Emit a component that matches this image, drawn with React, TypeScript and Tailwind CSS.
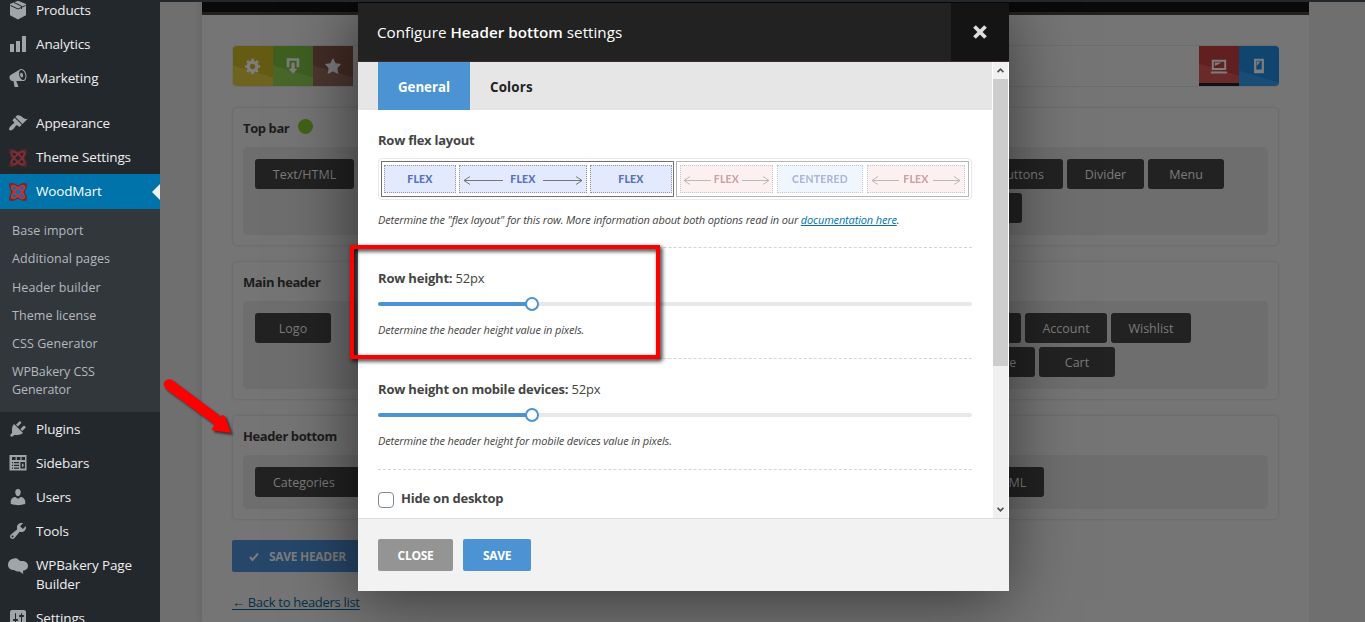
import type { ReactNode } from "react";
import clsx from "clsx";

const dash = {
  box: "M10 .8 18 4v11.2L10 19.6 2 15.2V4z",
  chart: "M18 18V2h-4v16h4zm-6 0V7H8v11h4zm-6 0v-8H2v8h4z",
  megaphone:
    "M18.15 5.94c.46 1.62.38 3.22-.02 4.48-.42 1.28-1.26 2.18-2.3 2.48-.16.06-.26.06-.4.06-.06.02-.12.02-.18.02-.06.02-.14.02-.22.02h-6.8l2.22 5.5c.02.14-.06.26-.14.34-.08.1-.24.16-.34.16H6.95c-.1 0-.26-.06-.34-.16-.08-.08-.16-.2-.14-.34l-1-5.5H4.25l-.02-.02c-.5.06-1.08-.18-1.54-.62s-.88-1.08-1.06-1.88c-.24-.8-.2-1.56-.02-2.2.18-.62.58-1.08 1.06-1.3l.02-.02 9-5.4c.1-.06.18-.1.24-.16.06-.04.14-.08.24-.12.16-.08.28-.12.5-.18 1.04-.3 2.24.1 3.22.98s1.84 2.24 2.26 3.86zm-2.58 5.98h-.02c.4-.1.74-.34 1.04-.7.58-.7.86-1.76.86-3.04 0-.64-.1-1.3-.28-1.98-.34-1.36-1.02-2.5-1.78-3.24s-1.68-1.1-2.46-.88c-.82.22-1.4.96-1.7 2-.32 1.04-.28 2.36.06 3.72.38 1.36 1 2.5 1.8 3.24.78.74 1.62 1.1 2.48.88zm-2.54-7.08c.22-.04.42-.02.62.04.38.16.76.48 1.02 1s.42 1.2.42 1.78c0 .3-.04.56-.12.8-.18.48-.44.84-.86.94-.34.1-.8-.06-1.14-.4s-.64-.86-.78-1.5c-.18-.62-.12-1.24.02-1.72s.48-.84.82-.94z",
  brush:
    "M14.48 11.06L7.41 3.99l1.5-1.5c.5-.56 2.3-.47 3.51.32 1.21.8 1.43 1.28 2.91 2.1 1.18.64 2.45 1.26 4.45.85zm-.71.71L6.7 4.7 4.93 6.47c-.39.39-.39 1.02 0 1.41l1.06 1.06c.39.39.39 1.03 0 1.42-.6.6-1.43 1.11-2.21 1.69-.35.26-.7.53-1.01.84C1.43 14.23.4 16.08 1.4 17.07c.99 1 2.84-.03 4.18-1.36.31-.31.58-.66.85-1.02.57-.78 1.08-1.61 1.69-2.21.39-.39 1.02-.39 1.41 0l1.06 1.06c.39.39 1.02.39 1.41 0z",
  plug: "M13.11 4.36L9.87 7.6 8 5.73l3.24-3.24c.35-.34 1.05-.2 1.56.32.52.51.66 1.21.31 1.55zm-8 1.77l.91-1.12 9.01 9.01-1.19.84c-.71.71-2.63 1.16-3.82 1.16H6.14L4.9 17.26c-.59.59-1.54.59-2.12 0-.59-.58-.59-1.53 0-2.12l1.24-1.24v-3.88c0-1.13.4-3.19 1.09-3.89zm7.26 3.97l3.24-3.24c.34-.35 1.04-.21 1.55.31.52.51.66 1.21.31 1.55l-3.24 3.25z",
  table:
    "M1.5 2h17v15.5h-17zM4 4v3h3.6V4zm4.8 0v3h3.6V4zm4.8 0v3H17V4zM4 9v1.2h1V9zm2 0v1.2h5V9zM4 11.8V13h1v-1.2zm2 0V13h5v-1.2zm-2 2.8v1.2h1v-1.2zm2 0v1.2h5v-1.2zM12.4 9v6.5H17V9zm1.5 1.8h1.6v2.9h-1.6z",
  user: "M10 9.25c-2.27 0-2.73-3.44-2.73-3.44C7 4.02 7.82 2 9.97 2c2.16 0 2.98 2.02 2.71 3.81 0 0-.41 3.44-2.68 3.44zm0 2.57L12.72 10c2.39 0 4.52 2.33 4.52 4.53v2.49s-3.65 1.13-7.24 1.13c-3.65 0-7.24-1.13-7.24-1.13v-2.49c0-2.25 1.94-4.48 4.47-4.48z",
  wrench:
    "M16.68 9.77c-1.34 1.34-3.3 1.67-4.95.99l-5.41 6.52c-.99.99-2.59.99-3.58 0s-.99-2.59 0-3.57l6.52-5.42c-.68-1.65-.35-3.61.99-4.95 1.28-1.28 3.12-1.62 4.72-1.06l-2.89 2.89 2.82 2.82 2.86-2.87c.53 1.58.18 3.39-1.08 4.65zM3.81 16.21c.4.39 1.04.39 1.43 0 .4-.4.4-1.04 0-1.43-.39-.4-1.03-.4-1.43 0-.39.39-.39 1.03 0 1.43z",
  bakery:
    "M6 2.6c1.8-.6 3.6 0 4.8 1.5.9 1 2 1 3.3 1 3.2 0 5.9 1.9 5.9 4.9 0 2.9-2.3 4.5-5 4.7l.2 3.3-3.7-2.4c-3.2.2-4.3-1.1-5.5-1.6C2.7 13.9 0 12.1 0 8.7 0 5.6 2.5 2.9 6 2.6z",
  sliders:
    "M18 16V4c0-1.1-.9-2-2-2H4c-1.1 0-2 .9-2 2v12c0 1.1.9 2 2 2h12c1.1 0 2-.9 2-2zM8 11h1c.55 0 1 .45 1 1s-.45 1-1 1H8v1.5c0 .28-.22.5-.5.5s-.5-.22-.5-.5V13H6c-.55 0-1-.45-1-1s.45-1 1-1h1V5.5c0-.28.22-.5.5-.5s.5.22.5.5V11zm5-2h-1c-.55 0-1-.45-1-1s.45-1 1-1h1V5.5c0-.28.22-.5.5-.5s.5.22.5.5V7h1c.55 0 1 .45 1 1s-.45 1-1 1h-1v5.5c0 .28-.22.5-.5.5s-.5-.22-.5-.5V9z",
  gear: "M18 12h-2.18c-.17.7-.44 1.35-.81 1.93l1.54 1.54-2.1 2.1-1.54-1.54c-.58.36-1.23.63-1.91.79V19H8v-2.18c-.68-.16-1.33-.43-1.91-.79l-1.54 1.54-2.12-2.12 1.54-1.54c-.36-.58-.63-1.23-.79-1.91H1V9.03h2.17c.16-.7.44-1.35.8-1.94L2.43 5.55l2.1-2.1 1.54 1.54c.58-.37 1.24-.64 1.93-.81V2h3v2.18c.68.16 1.33.43 1.91.79l1.54-1.54 2.12 2.12-1.54 1.54c.36.59.64 1.24.8 1.94H18V12zm-8.5 1.5c1.66 0 3-1.34 3-3s-1.34-3-3-3-3 1.34-3 3 1.34 3 3 3z",
  insert: "M3 1.5h14v10h-3V4.3H6v7.2H3zM8.2 6.3h3.6V13H15l-5 5.5L5 13h3.2z",
  star: "M10 1l3 6 6 .75-4.12 4.62L16 19l-6-3-6 3 1.13-6.63L1 7.75 7 7z",
  laptop: "M2 3h16v11.5H2zM4.2 5.2v7.1h11.6V5.200zM1 16h18v2.200H1zM5.300 6h7.700l-7.700 4z",
  phone: "M4.500 2h11v16h-11zM7 4.300v9.700h6V4.300zM7.600 5h4l-4 5z",
};

function Dash({ name, className }: { name: keyof typeof dash; className?: string }) {
  return (
    <svg viewBox="0 0 20 20" className={clsx("shrink-0", className)} fill="currentColor" fillRule="evenodd">
      <path d={dash[name]} />
      {name === "box" && (
        <path d="M2.5 5.5 10 9l7.5-3.500M6 2.500l7.500 3.600V9" fill="none" stroke="#23282d" strokeWidth="1" />
      )}
    </svg>
  );
}

function WoodIcon({ dim }: { dim?: boolean }) {
  return (
    <svg viewBox="0 0 20 20" className={clsx("-mb-px mt-px size-5 shrink-0", dim && "opacity-60")} fill="none">
      <path
        d="M2.500 2.500c4-1 5 2 7.500 2s3.500-3 7.500-2c1 4-2 5-2 7.500s3 3.500 2 7.500c-4 1-5-2-7.500-2s-3.500 3-7.500 2c-1-4 2-5 2-7.500s-3-3.500-2-7.500z"
        stroke="#74262b"
        strokeWidth="2.600"
      />
      <g stroke="#c4343a" strokeWidth="1.700">
        <ellipse cx="10" cy="10" rx="8.500" ry="3" transform="rotate(45 10 10)" />
        <ellipse cx="10" cy="10" rx="8.500" ry="3" transform="rotate(-45 10 10)" />
      </g>
    </svg>
  );
}

function MenuItem({ icon, children, active }: { icon: ReactNode; children: ReactNode; active?: boolean }) {
  return (
    <a
      className={clsx(
        "relative flex w-full shrink-0 gap-2 py-2 pl-2 text-[13.5px] leading-[18.2px] tracking-[-0.15px] text-[#eee]",
        active && "bg-[#0073aa] text-white",
      )}
    >
      <span className="-my-px text-[#a0a5aa]">{icon}</span>
      <span className="w-[110px]">{children}</span>
      {active && (
        <span className="absolute right-0 top-1/2 -translate-y-1/2 border-y-8 border-r-8 border-y-transparent border-r-[#f1f1f1]" />
      )}
    </a>
  );
}

const submenu = ["Base import", "Additional pages", "Header builder", "Theme license", "CSS Generator"];

function Sidebar() {
  return (
    <aside className="relative z-20 h-full w-40 shrink-0 overflow-hidden bg-[#23282d]">
      <nav className="-mt-[7px] flex flex-col">
        <MenuItem icon={<Dash name="box" className="size-5" />}>Products</MenuItem>
        <MenuItem icon={<Dash name="chart" className="size-5" />}>Analytics</MenuItem>
        <MenuItem icon={<Dash name="megaphone" className="size-5" />}>Marketing</MenuItem>
        <div className="h-[10.4px]" />
        <MenuItem icon={<Dash name="brush" className="size-5" />}>Appearance</MenuItem>
        <MenuItem icon={<WoodIcon dim />}>Theme Settings</MenuItem>
        <MenuItem icon={<WoodIcon />} active>
          WoodMart
        </MenuItem>
        <div className="flex h-[203px] flex-col bg-[#32373c] pl-3 pt-[8.5px] text-[12.5px] leading-[18.2px] tracking-[0.08px] text-[#b4b9be]">
          {submenu.map((item) => (
            <a key={item} className="py-[5px]">
              {item}
            </a>
          ))}
          <a className="w-28 py-[5px] tracking-[-0.1px]">WPBakery CSS Generator</a>
        </div>
        <MenuItem icon={<Dash name="plug" className="size-5" />}>Plugins</MenuItem>
        <MenuItem icon={<Dash name="table" className="size-5" />}>Sidebars</MenuItem>
        <MenuItem icon={<Dash name="user" className="size-5" />}>Users</MenuItem>
        <MenuItem icon={<Dash name="wrench" className="size-5" />}>Tools</MenuItem>
        <MenuItem icon={<Dash name="bakery" className="mt-px -mb-px size-5" />}>WPBakery Page Builder</MenuItem>
        <MenuItem icon={<Dash name="sliders" className="size-5" />}>Settings</MenuItem>
      </nav>
    </aside>
  );
}

function Chip({ children, className }: { children?: ReactNode; className: string }) {
  return (
    <div
      className={clsx(
        "flex h-[30px] shrink-0 items-center justify-center rounded-[3px] bg-[#222] pt-[2px] text-[12.5px] text-[#7c7c7c]",
        className,
      )}
    >
      {children}
    </div>
  );
}

type RowProps = { title: string; dot?: boolean; area: string; left: ReactNode; children: ReactNode };

function Row({ title, dot, area, left, children }: RowProps) {
  return (
    <div className="rounded-[5px] border border-[#6d6d6d] px-[10px] pb-[10px] shadow-[0_0_2px_rgba(0,0,0,0.08)]">
      <div className="flex h-[39px] items-center gap-2 pt-[2px] text-[13px] font-bold tracking-[-0.4px] text-[#1c1c1c]">
        {title}
        {dot && <span className="-mt-[4px] ml-px size-[15px] rounded-full bg-[#3f6319]" />}
      </div>
      <div className={clsx("flex justify-between rounded-[5px] bg-[#6e6e6e] pl-3 pt-3", area)}>
        {left}
        <div className="flex flex-col items-end gap-1">{children}</div>
      </div>
    </div>
  );
}

function Tool({ name, className }: { name: keyof typeof dash; className: string }) {
  return (
    <div className={clsx("flex size-10 items-center justify-center text-[#7d7d7d]", className)}>
      <Dash name={name} className="size-[18px]" />
    </div>
  );
}

function Builder() {
  return (
    <div className="mr-14 ml-[42px] flex-1 bg-[#757575] shadow-[-3px_0_5px_rgba(0,0,0,0.06)]">
      <div className="h-[15px] border-b-[3px] border-[#212121] bg-[#0a0a0a]" />
      <div className="flex flex-col px-[30px] pt-[30px]">
        <div className="flex h-[42px] items-center justify-between rounded-[4px] border border-[#6d6d6d]">
          <div className="flex overflow-hidden rounded-l-[4px]">
            <Tool name="gear" className="bg-[linear-gradient(197deg,#655b12_60%,#6e6420_61%)]" />
            <Tool name="insert" className="bg-[linear-gradient(197deg,#3f5f20_60%,#486729_61%)]" />
            <Tool name="star" className="bg-[linear-gradient(197deg,#432c26_60%,#4d3731_61%)]" />
          </div>
          <div className="-mr-px flex overflow-hidden rounded-r-[4px]">
            <Tool
              name="laptop"
              className="border-b-[3px] border-[#111] bg-[linear-gradient(197deg,#621f20_60%,#6a2a2a_61%)] pt-[3px]"
            />
            <Tool name="phone" className="bg-[linear-gradient(197deg,#104570_70%,#194d76_71%)]" />
          </div>
        </div>
        <div className="mt-5 flex flex-col gap-[15px]">
          <Row title="Top bar" dot area="h-[88px]" left={<Chip className="w-[99px]">Text/HTML</Chip>}>
            <div className="mr-11 flex gap-1">
              <Chip className="w-[84px]">Buttons</Chip>
              <Chip className="w-[77px]">Divider</Chip>
              <Chip className="w-[76px]">Menu</Chip>
            </div>
            <Chip className="mr-[246px] w-[76px]" />
          </Row>
          <Row title="Main header" area="h-[88px]" left={<Chip className="w-[76px]">Logo</Chip>}>
            <div className="mr-[77px] flex gap-1">
              <Chip className="w-[76px]" />
              <Chip className="w-[82px]">Account</Chip>
              <Chip className="w-[80px]">Wishlist</Chip>
            </div>
            <div className="mr-[153px] flex gap-1">
              <Chip className="w-[91px]">Compare</Chip>
              <Chip className="w-[76px]">Cart</Chip>
            </div>
          </Row>
          <Row
            title="Header bottom"
            area="h-[54px]"
            left={
              <Chip className="w-[130px] pt-[3px]">
                <span className="w-full pl-[18px]">Categories</span>
              </Chip>
            }
          >
            <Chip className="mr-[224px] w-[99px]">Text/HTML</Chip>
          </Row>
        </div>
        <button className="mt-5 flex h-8 w-36 items-center gap-[10px] rounded-[2px] bg-[#26476a] pl-[17px] pt-px text-[12px] font-bold tracking-[-0.3px] text-[#7d7d7d]">
          <svg viewBox="0 0 20 20" className="size-[10px]" fill="none" stroke="currentColor" strokeWidth="4">
            <path d="M2 10l5 6L18 3" />
          </svg>
          <span className="whitespace-nowrap">SAVE HEADER</span>
        </button>
        <a className="mt-[21px] self-start text-[13px] leading-[18px] tracking-[-0.3px] text-[#06304a] underline underline-offset-2">
          ← Back to headers list
        </a>
      </div>
    </div>
  );
}

function Arrow({ flip, className }: { flip?: boolean; className: string }) {
  return (
    <svg
      viewBox="0 0 40 10"
      preserveAspectRatio={flip ? "xMaxYMid slice" : "xMinYMid slice"}
      className={clsx("h-[10px]", className)}
      fill="none"
      stroke="#777"
      strokeWidth="1"
    >
      {flip ? <path d="M0 5.500h39M33 1.500l6 4-6 4" /> : <path d="M40 5.500H1M7 1.500l-6 4 6 4" />}
    </svg>
  );
}

function FlexBox({ label, arrow, className }: { label: string; arrow?: string; className: string }) {
  return (
    <div
      className={clsx(
        "flex h-[28px] items-center justify-center border border-dotted border-[#8f93a5] pt-px font-[Lato] text-[10.5px] font-black tracking-[0.2px]",
        className,
      )}
    >
      {arrow && <Arrow className={arrow} />}
      {label}
      {arrow && <Arrow flip className={arrow} />}
    </div>
  );
}

function Range({ label, hint }: { label: string; hint: string }) {
  return (
    <div className="flex h-[111px] flex-col border-b border-dashed border-[#d5d5d5]">
      <div className="mt-5 text-[13px] leading-5 tracking-[-0.2px] text-[#444]">
        <b>{label}</b> 52px
      </div>
      <div className="relative mt-[14px] h-1 rounded-full bg-[#e8e8e8]">
        <div className="h-1 w-[154px] rounded-full bg-[#4b93d2]" />
        <span className="absolute -top-[5px] left-[147px] size-[14px] rounded-full border-2 border-[#4b93d2] bg-white" />
      </div>
      <p className="mt-[14px] text-[11px] italic leading-5 tracking-[-0.15px] text-[#444]">{hint}</p>
    </div>
  );
}

function Modal() {
  return (
    <div className="absolute left-[358px] top-[3px] z-10 flex h-[588px] w-[651px] flex-col bg-white shadow-[-3px_8px_65px_rgba(0,0,0,0.55)]">
      <header className="flex h-[59px] shrink-0 border-b border-[#3f2c2c] bg-[#222] text-white">
        <h2 className="flex-1 self-center pl-[19px] text-[15.2px] tracking-[0.02px]">
          Configure <span className="font-semibold">Header bottom</span> settings
        </h2>
        <button className="flex w-[58px] items-center justify-center bg-[#141414]">
          <svg viewBox="0 0 14 14" className="size-[14px]" stroke="#ddd" strokeWidth="3.8">
            <path d="M1.5 1.5l11 11M12.5 1.5l-11 11" />
          </svg>
        </button>
      </header>
      <div className="flex h-[456px] shrink-0 overflow-hidden">
        <div className="flex-1">
          <div className="flex h-12 bg-[#e6e6e6] pl-5 text-[13.3px] font-bold">
            <div className="flex w-[92px] items-center justify-center bg-[#4b93d2] pt-[3px] text-white">General</div>
            <div className="flex items-center px-5 pt-[3px] tracking-[0.2px] text-[#222]">Colors</div>
          </div>
          <div className="px-5">
            <div className="flex h-[138px] flex-col border-b border-dashed border-[#d5d5d5]">
              <b className="mt-5 text-[13px] leading-5 tracking-[-0.25px] text-[#444]">Row flex layout</b>
              <div className="mt-[8px] flex h-[42px] gap-[2px] rounded-[4px] border border-[#e8e8e8] p-[2px]">
                <div className="flex w-[293px] shrink-0 items-center gap-[3px] border border-[#707070] pl-[2px]">
                  <FlexBox label="FLEX" className="w-[72px] bg-[#e3eafd] text-[#5a70b8]" />
                  <FlexBox
                    label="FLEX"
                    arrow="w-[40px]"
                    className="w-[128px] gap-[7px] bg-[#e3eafd] text-[#5a70b8]"
                  />
                  <FlexBox label="FLEX" className="w-[82px] bg-[#e3eafd] text-[#5a70b8]" />
                </div>
                <div className="flex w-[293px] shrink-0 items-center gap-[4px] border border-[#707070] pl-[3px] opacity-50">
                  <FlexBox
                    label="FLEX"
                    arrow="w-[28px]"
                    className="w-[93px] gap-[3px] bg-[#fde3e4] text-[#97484a]"
                  />
                  <FlexBox label="CENTERED" className="w-[86px] bg-[#e3eefd] text-[#5a70b8]" />
                  <FlexBox
                    label="FLEX"
                    arrow="w-[28px]"
                    className="w-[98px] gap-[4px] bg-[#fde3e4] text-[#97484a]"
                  />
                </div>
              </div>
              <p className="mt-[10px] whitespace-nowrap text-[11px] italic leading-5 tracking-[-0.145px] text-[#444]">
                Determine the "flex layout" for this row. More information about both options read in our{" "}
                <a className="text-[#0073aa] underline">documentation here</a>.
              </p>
            </div>
            <Range label="Row height:" hint="Determine the header height value in pixels." />
            <Range
              label="Row height on mobile devices:"
              hint="Determine the header height for mobile devices value in pixels."
            />
            <label className="mt-[18px] flex gap-[7px] text-[13px] font-bold leading-5 tracking-[-0.22px] text-[#444]">
              <span className="mt-[4px] size-4 rounded-[4px] border border-[#7e8993] bg-white" />
              Hide on desktop
            </label>
          </div>
        </div>
        <div className="flex w-[17px] flex-col items-center border-x border-white bg-[#f0f0f0] text-[#505050]">
          <svg viewBox="0 0 9 6" className="my-[6px] h-[5px] w-[9px] shrink-0" fill="none" stroke="currentColor" strokeWidth="2">
            <path d="M1 5l3.5-3.5L8 5" />
          </svg>
          <div className="h-[287px] w-[15px] shrink-0 bg-[#cdcdcd]" />
          <svg viewBox="0 0 9 6" className="mb-[6px] mt-auto h-[5px] w-[9px] shrink-0" fill="none" stroke="currentColor" strokeWidth="2">
            <path d="M1 1l3.5 3.5L8 1" />
          </svg>
        </div>
      </div>
      <footer className="flex flex-1 gap-[10px] border-t border-[#ddd] bg-[#f2f2f2] pl-5 pt-5 text-[12px] font-bold tracking-[-0.3px] text-white">
        <button className="h-8 w-[75px] rounded-[2px] bg-[#949494] pt-[2px]">CLOSE</button>
        <button className="h-8 w-[68px] rounded-[2px] bg-[#4b93d2] pt-[2px]">SAVE</button>
      </footer>
    </div>
  );
}

export default function App() {
  return (
    <div className="relative h-[622px] w-[1365px] overflow-hidden bg-[#6f6f6f] font-['Open_Sans',sans-serif]">
      <div className="relative z-20 h-[2px] bg-[#23282d]" />
      <div className="-mt-[2px] flex h-full">
        <Sidebar />
        <Builder />
      </div>
      <Modal />
      <div className="absolute left-[350px] top-[245px] z-30 h-[114px] w-[310px] border-4 border-[#fe0000] drop-shadow-[2px_2px_2px_rgba(0,0,0,0.9)]" />
      <svg
        viewBox="0 0 80 70"
        className="absolute left-[160px] top-[374px] z-30 h-[70px] w-20 drop-shadow-[2px_2px_1px_rgba(0,0,0,0.6)]"
        fill="#fe0000"
      >
        <path d="M12 6 59 41q.5 2 1 3l2-3q2-.5 3 1.5l6 16.5-18-2.5q-2-1-.5-2.5l2-3.5L6 15Q2 10 5 7t7-1z" />
      </svg>
    </div>
  );
}
